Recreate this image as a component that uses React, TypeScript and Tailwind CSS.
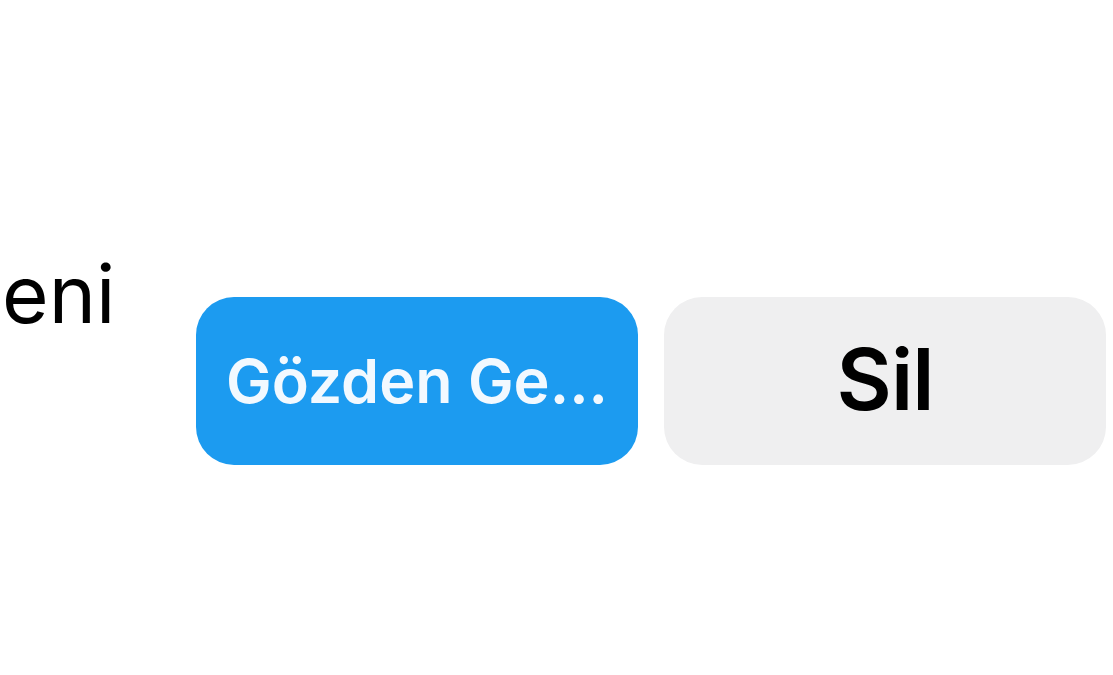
export default function App() {
  return (
    <div
      className="w-[1113px] h-[675px] bg-white overflow-hidden"
      style={{ fontFamily: 'Inter, "Liberation Sans", Arial, sans-serif' }}
    >
      <div className="flex items-start pt-[254px]">
        <div className="w-[196px] shrink-0 pl-[2px] text-[80px] leading-none text-black">
          eni
        </div>
        <div className="flex gap-[26px] mt-[43px]">
          <div className="w-[442px] h-[168px] rounded-[38px] bg-[#1c9bf0] flex items-center justify-center">
            <span className="text-[61px] leading-none font-semibold text-[#f2f9ff] tracking-[0px]">
              Gözden Ge...
            </span>
          </div>
          <div className="w-[442px] h-[168px] rounded-[38px] bg-[#efeff0] flex items-center justify-center">
            <span className="text-[85px] leading-none font-semibold text-black tracking-[-1px] mt-[-4px]">
              Sil
            </span>
          </div>
        </div>
      </div>
    </div>
  );
}
